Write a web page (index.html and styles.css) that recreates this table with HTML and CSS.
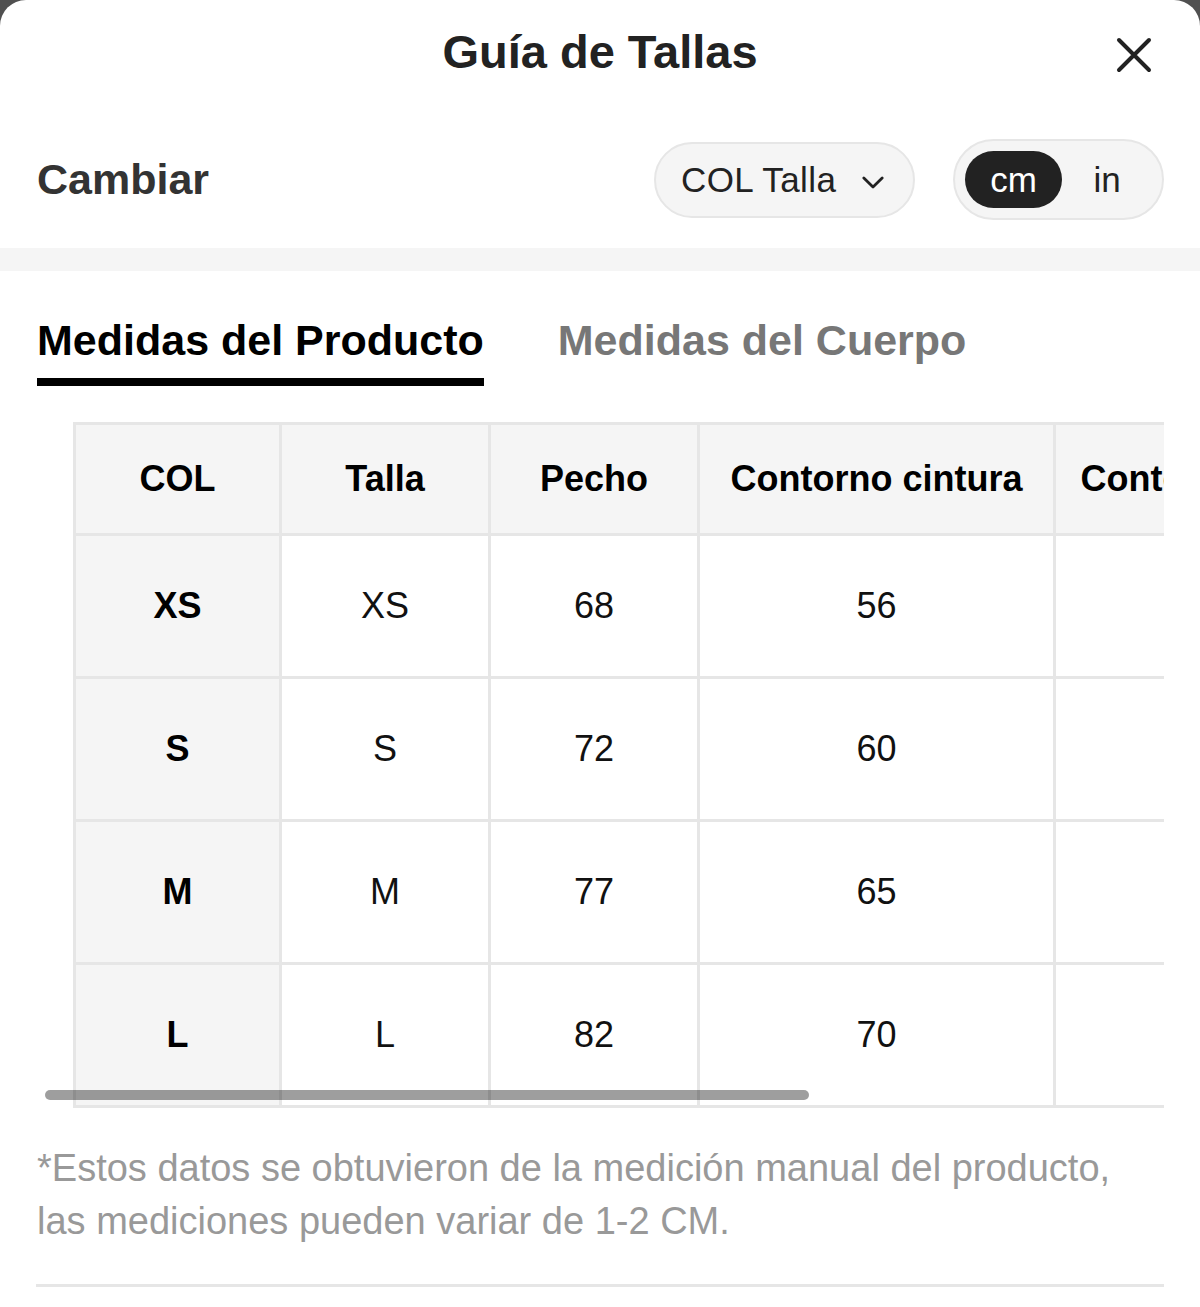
FILE: index.html
```html
<!DOCTYPE html>
<html lang="es">
<head>
<meta charset="utf-8">
<title>Guía de Tallas</title>
<link rel="stylesheet" href="styles.css">
</head>
<body>
<div class="modal">
  <header class="header">
    <span></span>
    <h1 class="title">Guía de Tallas</h1>
    <button class="close" aria-label="Cerrar">
      <svg width="36" height="36" viewBox="0 0 36 36"><path d="M3 3L33 33M33 3L3 33" stroke="#222" stroke-width="4" stroke-linecap="round" fill="none"/></svg>
    </button>
  </header>

  <div class="controls">
    <span class="label">Cambiar</span>
    <div class="control-group">
      <div class="select">
        <span>COL Talla</span>
        <svg class="chev" width="24" height="14" viewBox="0 0 24 14"><path d="M2 2L12 12L22 2" stroke="#222" stroke-width="3" fill="none" stroke-linecap="round" stroke-linejoin="round"/></svg>
      </div>
      <div class="unit">
        <span class="unit-opt active">cm</span>
        <span class="unit-opt">in</span>
      </div>
    </div>
  </div>

  <div class="band"></div>

  <nav class="tabs">
    <span class="tab active">Medidas del Producto</span>
    <span class="tab">Medidas del Cuerpo</span>
  </nav>

  <div class="scroll">
    <table class="sizes">
      <colgroup>
        <col class="c1"><col class="c2"><col class="c3"><col class="c4"><col class="c5">
      </colgroup>
      <thead>
        <tr><th>COL</th><th>Talla</th><th>Pecho</th><th>Contorno cintura</th><th>Contorno cadera</th></tr>
      </thead>
      <tbody>
        <tr><td class="key">XS</td><td>XS</td><td>68</td><td>56</td><td></td></tr>
        <tr><td class="key">S</td><td>S</td><td>72</td><td>60</td><td></td></tr>
        <tr><td class="key">M</td><td>M</td><td>77</td><td>65</td><td></td></tr>
        <tr><td class="key">L</td><td>L</td><td>82</td><td>70</td><td></td></tr>
      </tbody>
    </table>
    <div class="thumb"></div>
  </div>

  <p class="note">*Estos datos se obtuvieron de la medición manual del producto, las mediciones pueden variar de 1-2 CM.</p>

  <hr class="divider">
</div>
</body>
</html>
```

FILE: styles.css
```css
* { box-sizing: border-box; }

html, body {
  margin: 0;
  padding: 0;
  background: #505050;
}

body {
  font-family: "Liberation Sans", Arial, sans-serif;
  color: #222;
}

.modal {
  background: #fff;
  border-radius: 26px 26px 0 0;
  min-height: 1307px;
}

.header {
  height: 104px;
  display: grid;
  grid-template-columns: 1fr auto 1fr;
  align-items: center;
}

.title {
  margin: 0;
  font-size: 47px;
  line-height: 56px;
  font-weight: 700;
  color: #222;
}

.close {
  justify-self: end;
  margin-right: 48px;
  margin-top: 6px;
  padding: 0;
  border: 0;
  background: none;
  width: 36px;
  height: 36px;
  display: flex;
}

.controls {
  display: flex;
  align-items: center;
  justify-content: space-between;
  padding: 35px 36px 28px 37px;
}

.label {
  font-size: 43px;
  font-weight: 700;
  color: #333;
}

.control-group {
  display: flex;
  align-items: center;
  gap: 38px;
}

.select {
  width: 261px;
  height: 76px;
  border: 2px solid #e6e6e6;
  background: #f5f5f5;
  border-radius: 38px;
  display: flex;
  align-items: center;
  padding-left: 25px;
  gap: 26px;
  font-size: 35px;
  letter-spacing: 0.4px;
  color: #222;
}

.chev {
  margin-top: 6px;
  width: 22px;
  height: 13px;
}

.unit {
  width: 211px;
  height: 81px;
  border: 2px solid #e6e6e6;
  background: #f5f5f5;
  border-radius: 41px;
  display: flex;
  align-items: center;
  padding: 0 10px;
}

.unit-opt {
  font-size: 35px;
  color: #222;
  height: 57px;
  display: flex;
  align-items: center;
  justify-content: center;
  border-radius: 29px;
  flex: 1;
}

.unit-opt.active {
  flex: 0 0 97px;
  background: #222;
  color: #fff;
}

.band {
  height: 23px;
  background: #f5f5f5;
}

.tabs {
  display: flex;
  gap: 74px;
  padding: 43px 36px 0 37px;
}

.tab {
  font-size: 43px;
  line-height: 52px;
  font-weight: 700;
  color: #777;
  padding-bottom: 12px;
  border-bottom: 8px solid transparent;
}

.tab.active {
  color: #000;
  border-bottom-color: #000;
}

.scroll {
  position: relative;
  overflow: hidden;
  margin: 36px 36px 0 36px;
}

.sizes {
  margin-left: 37px;
  border-collapse: collapse;
  table-layout: fixed;
  width: 1320px;
  font-size: 36px;
  color: #111;
}

.c1 { width: 206px; }
.c2 { width: 209px; }
.c3 { width: 209px; }
.c4 { width: 356px; }
.c5 { width: 340px; }

.sizes th,
.sizes td {
  border: 3px solid #e6e6e6;
  text-align: center;
  vertical-align: middle;
  white-space: nowrap;
  overflow: hidden;
  padding: 0 24px;
}

.sizes th {
  height: 111px;
  background: #f5f5f5;
  font-weight: 700;
  color: #000;
}

.sizes td {
  height: 143px;
  font-weight: 400;
}

.sizes td.key {
  background: #f5f5f5;
  font-weight: 700;
  color: #000;
}

.thumb {
  position: absolute;
  left: 9px;
  bottom: 8px;
  width: 764px;
  height: 10px;
  border-radius: 5px;
  background: rgba(0, 0, 0, 0.38);
}

.note {
  margin: 34px 36px 0 37px;
  font-size: 38px;
  line-height: 53px;
  color: #999;
}

.divider {
  margin: 36px 36px 0 36px;
  border: 0;
  height: 3px;
  background: #e6e6e6;
}
```
